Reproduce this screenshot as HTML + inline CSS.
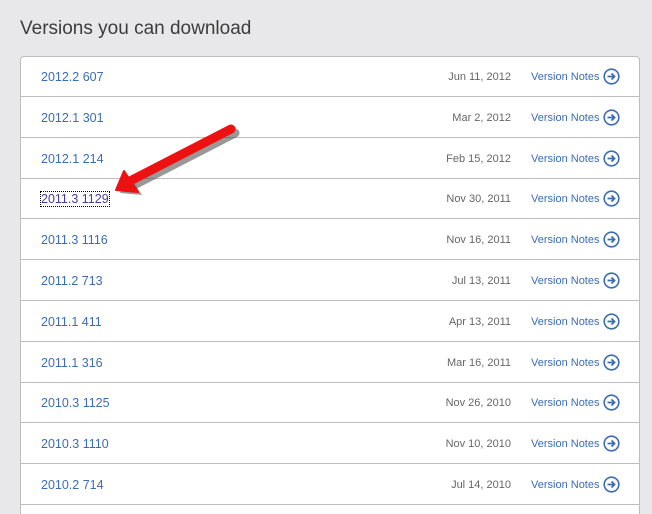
<!DOCTYPE html>
<html><head><style>
html,body{margin:0;width:652px;height:514px;overflow:hidden}
body{background:#e8e8ea;font-family:"Liberation Sans",sans-serif;position:relative}
h1{position:absolute;left:20px;top:18px;margin:0;font-weight:normal;font-size:19px;color:#3c3c3c}
.box{position:absolute;left:20px;top:56px;width:618px;height:470px;background:#fff;border:1px solid #bdbdbd;border-radius:4px}
.row{position:absolute;left:0;width:618px;height:39px;border-bottom:1px solid #bdbdbd}
.v{position:absolute;left:20px;top:13px;font-size:12.5px;color:#3b6db4}
.d{position:absolute;right:128px;top:14px;font-size:11px;color:#666}
.n{position:absolute;left:510px;top:14px;font-size:11px;color:#3b6db4}
.i{position:absolute;left:582px;top:11px}
.sel{outline:1px dotted #000;color:#4a3aa0}
</style></head><body>
<h1>Versions you can download</h1>
<div class="box">
<div class="row" style="top:0"><span class="v">2012.2 607</span><span class="d">Jun 11, 2012</span><span class="n">Version Notes</span><svg class="i" width="17" height="17"><circle cx="8.5" cy="8.5" r="7.3" fill="none" stroke="#3b6db4" stroke-width="1.6"/><path d="M4.5 8.5h7M8.5 5.5l3 3-3 3" fill="none" stroke="#3b6db4" stroke-width="1.8"/></svg></div>
<div class="row" style="top:40.8px"><span class="v">2012.1 301</span><span class="d">Mar 2, 2012</span><span class="n">Version Notes</span><svg class="i" width="17" height="17"><circle cx="8.5" cy="8.5" r="7.3" fill="none" stroke="#3b6db4" stroke-width="1.6"/><path d="M4.5 8.5h7M8.5 5.5l3 3-3 3" fill="none" stroke="#3b6db4" stroke-width="1.8"/></svg></div>
<div class="row" style="top:81.6px"><span class="v">2012.1 214</span><span class="d">Feb 15, 2012</span><span class="n">Version Notes</span><svg class="i" width="17" height="17"><circle cx="8.5" cy="8.5" r="7.3" fill="none" stroke="#3b6db4" stroke-width="1.6"/><path d="M4.5 8.5h7M8.5 5.5l3 3-3 3" fill="none" stroke="#3b6db4" stroke-width="1.8"/></svg></div>
<div class="row" style="top:122.4px"><span class="v sel">2011.3 1129</span><span class="d">Nov 30, 2011</span><span class="n">Version Notes</span><svg class="i" width="17" height="17"><circle cx="8.5" cy="8.5" r="7.3" fill="none" stroke="#3b6db4" stroke-width="1.6"/><path d="M4.5 8.5h7M8.5 5.5l3 3-3 3" fill="none" stroke="#3b6db4" stroke-width="1.8"/></svg></div>
<div class="row" style="top:163.2px"><span class="v">2011.3 1116</span><span class="d">Nov 16, 2011</span><span class="n">Version Notes</span><svg class="i" width="17" height="17"><circle cx="8.5" cy="8.5" r="7.3" fill="none" stroke="#3b6db4" stroke-width="1.6"/><path d="M4.5 8.5h7M8.5 5.5l3 3-3 3" fill="none" stroke="#3b6db4" stroke-width="1.8"/></svg></div>
<div class="row" style="top:204px"><span class="v">2011.2 713</span><span class="d">Jul 13, 2011</span><span class="n">Version Notes</span><svg class="i" width="17" height="17"><circle cx="8.5" cy="8.5" r="7.3" fill="none" stroke="#3b6db4" stroke-width="1.6"/><path d="M4.5 8.5h7M8.5 5.5l3 3-3 3" fill="none" stroke="#3b6db4" stroke-width="1.8"/></svg></div>
<div class="row" style="top:244.8px"><span class="v">2011.1 411</span><span class="d">Apr 13, 2011</span><span class="n">Version Notes</span><svg class="i" width="17" height="17"><circle cx="8.5" cy="8.5" r="7.3" fill="none" stroke="#3b6db4" stroke-width="1.6"/><path d="M4.5 8.5h7M8.5 5.5l3 3-3 3" fill="none" stroke="#3b6db4" stroke-width="1.8"/></svg></div>
<div class="row" style="top:285.6px"><span class="v">2011.1 316</span><span class="d">Mar 16, 2011</span><span class="n">Version Notes</span><svg class="i" width="17" height="17"><circle cx="8.5" cy="8.5" r="7.3" fill="none" stroke="#3b6db4" stroke-width="1.6"/><path d="M4.5 8.5h7M8.5 5.5l3 3-3 3" fill="none" stroke="#3b6db4" stroke-width="1.8"/></svg></div>
<div class="row" style="top:326.4px"><span class="v">2010.3 1125</span><span class="d">Nov 26, 2010</span><span class="n">Version Notes</span><svg class="i" width="17" height="17"><circle cx="8.5" cy="8.5" r="7.3" fill="none" stroke="#3b6db4" stroke-width="1.6"/><path d="M4.5 8.5h7M8.5 5.5l3 3-3 3" fill="none" stroke="#3b6db4" stroke-width="1.8"/></svg></div>
<div class="row" style="top:367.2px"><span class="v">2010.3 1110</span><span class="d">Nov 10, 2010</span><span class="n">Version Notes</span><svg class="i" width="17" height="17"><circle cx="8.5" cy="8.5" r="7.3" fill="none" stroke="#3b6db4" stroke-width="1.6"/><path d="M4.5 8.5h7M8.5 5.5l3 3-3 3" fill="none" stroke="#3b6db4" stroke-width="1.8"/></svg></div>
<div class="row" style="top:408px"><span class="v">2010.2 714</span><span class="d">Jul 14, 2010</span><span class="n">Version Notes</span><svg class="i" width="17" height="17"><circle cx="8.5" cy="8.5" r="7.3" fill="none" stroke="#3b6db4" stroke-width="1.6"/><path d="M4.5 8.5h7M8.5 5.5l3 3-3 3" fill="none" stroke="#3b6db4" stroke-width="1.8"/></svg></div>
</div>
<svg style="position:absolute;left:0;top:0" width="652" height="514">
<path d="M233 131 L132 183" stroke="#333" stroke-opacity=".5" stroke-width="9" stroke-linecap="round" transform="translate(2,2)"/>
<path d="M118 191 L126 173 L140 193 Z" fill="#333" fill-opacity=".5" transform="translate(2,2)"/>
<path d="M231 129 L130 181" stroke="#ee1111" stroke-width="9" stroke-linecap="round"/>
<path d="M116 190 L124 171 L138 192 Z" fill="#ee1111" stroke="#ee1111" stroke-width="2" stroke-linejoin="round"/>
</svg>
</body></html>
